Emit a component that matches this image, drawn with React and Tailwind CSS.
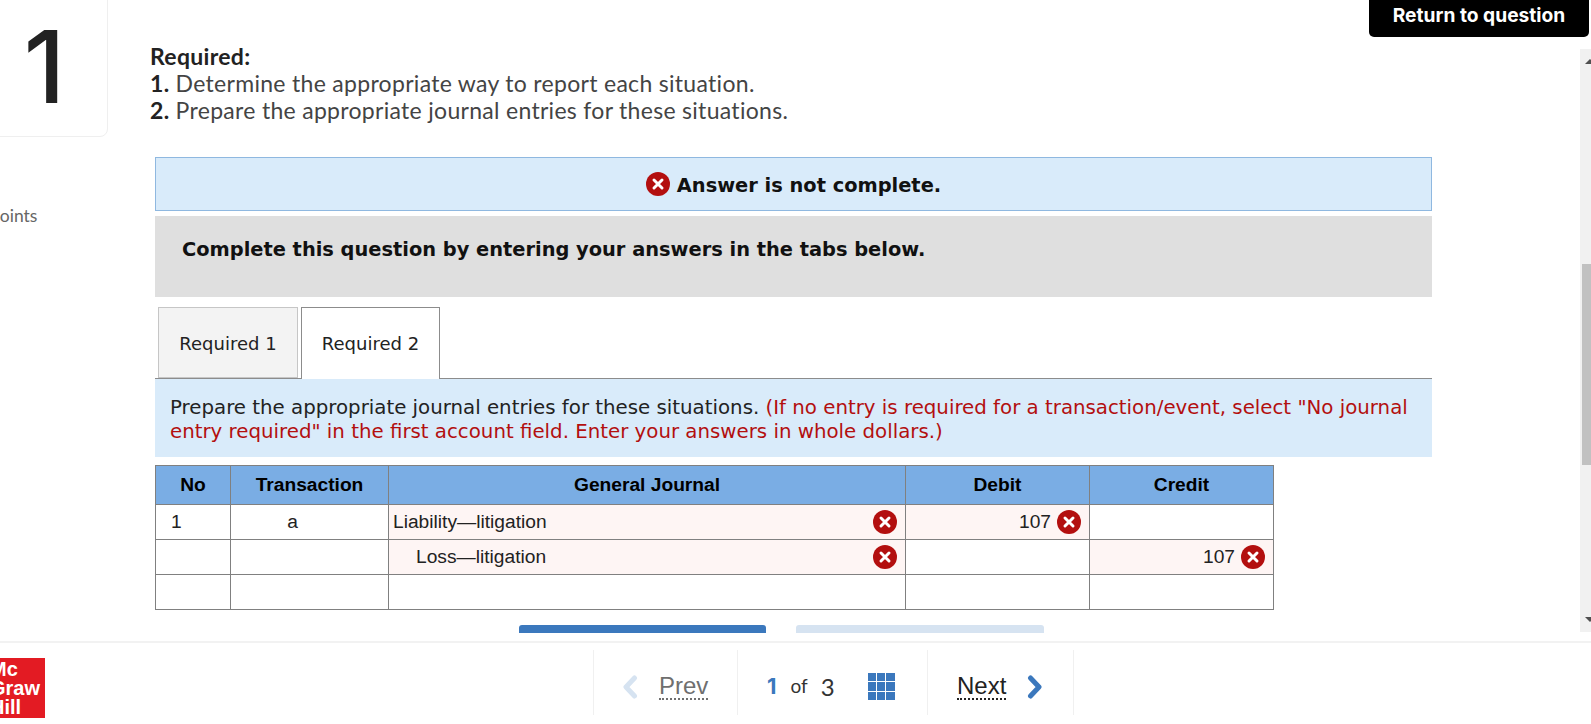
import React from "react";

const proxima = "font-['Lato','Open_Sans',sans-serif]";
const inter = "font-['Inter',sans-serif]";
const verdana = "font-['DejaVu_Sans',sans-serif]";
const arial = "font-['Liberation_Sans',Arial,sans-serif]";

function XIcon() {
  return (
    <svg width="24" height="24" viewBox="0 0 24 24" className="shrink-0 block">
      <circle cx="12" cy="12" r="12" fill="#b30f0f" />
      <path d="M8 8l8 8M16 8l-8 8" stroke="#fff" strokeWidth="3" strokeLinecap="round" />
    </svg>
  );
}

function Chevron({ dir, color }) {
  return (
    <svg width="16" height="24" viewBox="0 0 16 24" className="block">
      <path
        d={dir === "left" ? "M12.5 3L4 12l8.5 9" : "M3.5 3L12 12l-8.5 9"}
        fill="none"
        stroke={color}
        strokeWidth="5"
        strokeLinecap="round"
        strokeLinejoin="round"
      />
    </svg>
  );
}

function GridIcon() {
  return (
    <div className="grid grid-cols-3 gap-px w-[27px] h-[27px]">
      {[...Array(9)].map((_, i) => (
        <div key={i} className="bg-[#3b78bd]" />
      ))}
    </div>
  );
}

const rows = [
  { no: "1", tx: "a", acct: "Liability—litigation", indent: false, debit: "107", credit: "" },
  { no: "", tx: "", acct: "Loss—litigation", indent: true, debit: "", credit: "107" },
  { no: "", tx: "", acct: "", indent: false, debit: "", credit: "" },
];

const th = "border border-[#808080] text-center font-bold p-0";
const td = "border border-[#808080] p-0 h-[35px]";

function AmountCell({ value }) {
  if (!value) return <td className={td} />;
  return (
    <td className={`${td} bg-[#fef5f4]`}>
      <div className="flex items-center justify-end gap-[6px] pr-[8px]">
        <span>{value}</span>
        <XIcon />
      </div>
    </td>
  );
}

function JournalTable() {
  return (
    <table className={`${arial} mt-[8px] w-[1118px] table-fixed border-collapse text-[19.2px] text-[#222]`}>
      <colgroup>
        <col className="w-[75px]" />
        <col className="w-[158px]" />
        <col className="w-[517px]" />
        <col className="w-[184px]" />
        <col className="w-[184px]" />
      </colgroup>
      <thead>
        <tr className="h-[39px] bg-[#7aade4] text-black">
          <th className={th}>No</th>
          <th className={th}>Transaction</th>
          <th className={th}>General Journal</th>
          <th className={th}>Debit</th>
          <th className={th}>Credit</th>
        </tr>
      </thead>
      <tbody>
        {rows.map((r, i) => (
          <tr key={i}>
            <td className={`${td} pl-[15px]`}>{r.no}</td>
            <td className={`${td} text-center pr-[34px]`}>{r.tx}</td>
            {r.acct ? (
              <td className={`${td} bg-[#fef5f4]`}>
                <div className={`flex items-center justify-between pr-[8px] ${r.indent ? "pl-[27px]" : "pl-[4px]"}`}>
                  <span>{r.acct}</span>
                  <XIcon />
                </div>
              </td>
            ) : (
              <td className={td} />
            )}
            <AmountCell value={r.debit} />
            <AmountCell value={r.credit} />
          </tr>
        ))}
      </tbody>
    </table>
  );
}

function Footer() {
  return (
    <div className="h-[83px] border-t-2 border-[#f2f2f2] flex bg-white">
      <div className={`${arial} mt-[15px] w-[45px] h-[60px] bg-[#e31b23] overflow-hidden text-white font-bold text-[20px] leading-[19px] pt-[2px]`}>
        <div className="-ml-[10px]">Mc</div>
        <div className="-ml-[10px]">Graw</div>
        <div className="-ml-[10px]">Hill</div>
      </div>
      <div className={`${arial} ml-[548px] mt-[7px] flex h-[65px] text-[24px] border-r border-[#f0f0f0]`}>
        <div className="w-[144px] border-l border-[#f0f0f0] flex items-center pl-[28px] pt-[8px] gap-[21px]">
          <Chevron dir="left" color="#d6e3f1" />
          <span className="text-[#6f6f6f] border-b-2 border-dotted border-[#6f6f6f] leading-[25px]">Prev</span>
        </div>
        <div className="w-[190px] border-l border-[#f0f0f0] flex items-center pl-[29px] pt-[8px]">
          <span className={`${inter} font-bold text-[22px] text-[#3b78bd]`}>1</span>
          <span className={`${proxima} ml-[14px] text-[19px] text-[#333]`}>of</span>
          <span className={`${proxima} ml-[13px] text-[#333]`}>3</span>
          <div className="ml-[33px]">
            <GridIcon />
          </div>
        </div>
        <div className="w-[146px] border-l border-[#f0f0f0] flex items-center pl-[29px] pt-[8px] gap-[21px]">
          <span className="text-[#222] border-b-2 border-dotted border-[#222] leading-[25px]">Next</span>
          <Chevron dir="right" color="#3b78bd" />
        </div>
      </div>
    </div>
  );
}

export default function App() {
  return (
    <div className="relative h-[724px] w-full overflow-hidden bg-white">
      {/* return button sits over the page */}
      <div className={`${inter} absolute right-[2px] top-0 w-[220px] h-[37px] bg-black rounded-b-[5px] text-white font-bold text-[19.2px] flex items-center justify-center pb-[6px]`}>
        Return to question
      </div>

      <div className="flex h-[641px]">
        {/* left rail */}
        <div className="w-[150px] shrink-0">
          <div className={`${inter} -ml-[20px] -mt-[10px] w-[128px] h-[147px] border border-[#efefef] rounded-[8px] flex items-center justify-center pl-[1px] pt-[6px] text-[100px] font-medium leading-none text-[#222]`}>
            1
          </div>
          <div className={`${proxima} -ml-[10px] mt-[67px] text-[17.5px] leading-[24px] text-[#666]`}>points</div>
        </div>

        {/* question pane */}
        <div className="w-[1282px] shrink-0 pl-[5px] pt-[43px] h-[633px] overflow-hidden">
          <div className={`${proxima} -ml-[5px] text-[23px] tracking-[0.3px] leading-[27px] text-[#444]`}>
            <div className="font-bold text-[#222]">Required:</div>
            <div><b className="text-[#222]">1.</b> Determine the appropriate way to report each situation.</div>
            <div><b className="text-[#222]">2.</b> Prepare the appropriate journal entries for these situations.</div>
          </div>

          <div className={`${verdana} mt-[33px] h-[54px] border border-[#8fb8e0] bg-[#d9ebfa] flex items-center justify-center gap-[7px] text-[19.4px] font-bold text-[#111]`}>
            <XIcon />
            <span className="pt-[3px]">Answer is not complete.</span>
          </div>
          <div className={`${verdana} mt-[5px] h-[81px] bg-[#dfdfdf] pl-[27px] pt-[21px] text-[19.4px] font-bold leading-[26px] text-[#111]`}>
            Complete this question by entering your answers in the tabs below.
          </div>

          <div className={`${verdana} mt-[10px] flex items-end h-[72px] pl-[3px] gap-[3px] border-b border-[#8c8c8c] text-[18px] text-[#222]`}>
            <div className="w-[140px] h-[71px] pt-[2px] bg-[#f3f3f3] border border-[#c6c6c6] flex items-center justify-center">Required 1</div>
            <div className="w-[139px] h-[72px] -mb-px bg-white border border-b-0 border-[#8c8c8c] flex items-center justify-center">Required 2</div>
          </div>

          <div className={`${verdana} h-[78px] bg-[#d9ebfa] pl-[15px] pr-[20px] pt-[17px] text-[19.8px] leading-[24px] text-[#222]`}>
            Prepare the appropriate journal entries for these situations.{" "}
            <span className="text-[#b30f0f]">
              (If no entry is required for a transaction/event, select "No journal entry required" in the first account field. Enter your answers in whole dollars.)
            </span>
          </div>

          <JournalTable />

          <div className="mt-[15px] flex gap-[30px] pl-[364px]">
            <div className="w-[247px] h-[20px] rounded-t-[3px] bg-[#3b78bd]" />
            <div className="w-[248px] h-[20px] rounded-t-[3px] bg-[#d6e3f1]" />
          </div>
        </div>

        {/* scrollbar */}
        <div className="ml-auto mt-[49px] h-[583px] w-[11px] bg-[#f1f1f1] relative">
          <div className="w-0 h-0 mt-[10px] ml-[5px] border-x-[5px] border-b-[5px] border-x-transparent border-b-[#505050]" />
          <div className="absolute left-[2px] top-[215px] w-[9px] h-[201px] bg-[#c1c1c1]" />
          <div className="absolute left-[5px] bottom-[10px] w-0 h-0 border-x-[5px] border-t-[5px] border-x-transparent border-t-[#505050]" />
        </div>
      </div>

      <Footer />
    </div>
  );
}
